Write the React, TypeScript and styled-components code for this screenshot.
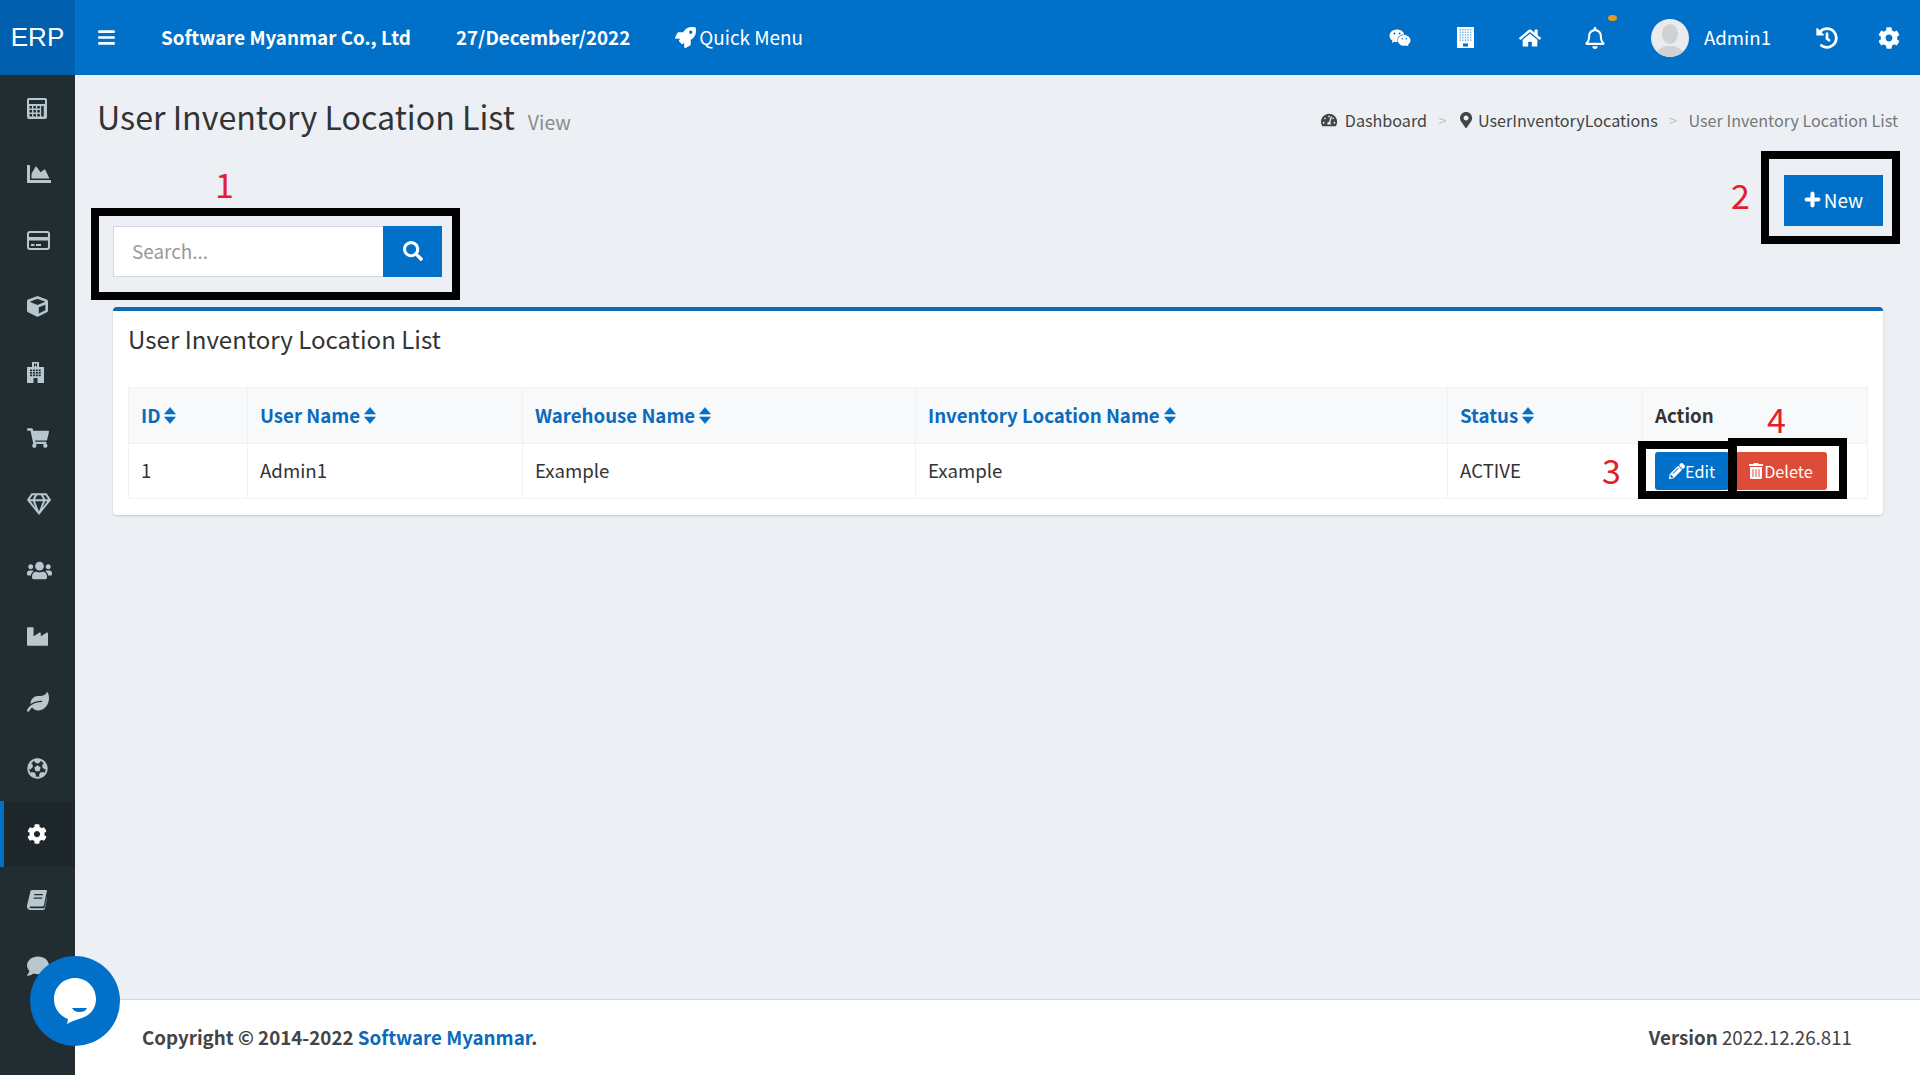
import React from "react";
import styled, { createGlobalStyle } from "styled-components";
import {
  FaBars, FaChartArea, FaCog, FaComment, FaCube, FaFutbol,
  FaHistory, FaHome, FaIndustry, FaLeaf, FaMapMarkerAlt, FaPencilAlt, FaPlus, FaRegBell, FaRegGem,
  FaRocket, FaSearch, FaShoppingCart, FaTachometerAlt, FaTrashAlt, FaUsers, FaWeixin,
} from "react-icons/fa";

const BLUE = "#0070c9";
const DARK = "#222d32";
const SANS = `"Noto Sans CJK SC", "Source Sans Pro", "Noto Sans", sans-serif`;

const Global = createGlobalStyle`
  html, body { margin: 0; padding: 0; }
  body { font-family: ${SANS}; color: #333; background: #ecf0f5; line-height: 1.2; }
  * { box-sizing: border-box; }
`;

const Shell = styled.div`
  position: relative;
  width: 1920px;
  height: 1075px;
  overflow: hidden;
  display: grid;
  grid-template-columns: 75px 1fr;
  grid-template-rows: 75px 1fr;
`;

const TopBar = styled.header`
  grid-column: 1 / 3;
  display: flex;
  align-items: center;
  background: ${BLUE};
  color: #fff;
`;

const Logo = styled.div`
  width: 75px;
  height: 75px;
  display: flex;
  align-items: center;
  justify-content: center;
  background: #0060ad;
  font: 26px "Liberation Sans", sans-serif;
`;

const Burger = styled.span`
  display: flex;
  margin: 0 45px 0 22px;
  font-size: 19px;
`;

const Brand = styled.span<{ $gap: number }>`
  font-size: 18.8px;
  font-weight: 700;
  margin-right: ${(p) => p.$gap}px;
  white-space: nowrap;
`;

const QuickMenu = styled.span`
  display: flex;
  align-items: center;
  gap: 3px;
  font-size: 18.9px;
`;

const TopRight = styled.div`
  margin-left: auto;
  display: flex;
  align-items: center;
`;

const TopIcon = styled.span<{ $w?: number }>`
  position: relative;
  width: ${(p) => p.$w ?? 65}px;
  display: flex;
  justify-content: center;
  font-size: 22px;
`;

const Dot = styled.i`
  position: absolute;
  left: 45px;
  top: -12px;
  width: 9px;
  height: 6px;
  border-radius: 50%;
  background: #e89a1e;
`;

const AvatarWrap = styled.span`
  display: flex;
  margin: 0 15px 0 23px;
`;

const UserName = styled.span`
  font-size: 18.67px;
  margin-right: 25px;
`;

const Sidebar = styled.nav`
  background: ${DARK};
`;

const SideItem = styled.div<{ $active?: boolean; $size: number }>`
  height: 66px;
  display: flex;
  align-items: center;
  padding-left: ${(p) => (p.$active ? 23 : 27)}px;
  font-size: ${(p) => p.$size}px;
  color: ${(p) => (p.$active ? "#fff" : "#b8c7ce")};
  background: ${(p) => (p.$active ? "#1e282c" : "transparent")};
  border-left: ${(p) => (p.$active ? `4px solid ${BLUE}` : "0")};
`;

const Main = styled.main`
  display: flex;
  flex-direction: column;
  min-width: 0;
`;

const Content = styled.section`
  flex: 1;
`;

const PageHeader = styled.div`
  height: 76px;
  padding: 7px 22px 0 22px;
  display: flex;
  align-items: center;
  justify-content: space-between;
`;

const Title = styled.h1`
  margin: 0;
  font-size: 32.2px;
  font-weight: 400;
  color: #333;
`;

const SubTitle = styled.small`
  margin-left: 13px;
  font-size: 19.5px;
  color: #8a8a8a;
`;

const Crumbs = styled.div`
  display: flex;
  align-items: center;
  font-size: 16.15px;
  color: #444;
  padding-top: 8px;
`;

const CrumbIcon = styled.span<{ $gap: number }>`
  display: flex;
  margin-right: ${(p) => p.$gap}px;
`;

const CrumbSep = styled.span`
  margin: 0 11.5px;
  color: #bbb;
  font-size: 14px;
`;

const CrumbLast = styled.span`
  color: #777;
`;

const Toolbar = styled.div`
  height: 156px;
  padding: 24px 37px 0 38px;
  display: flex;
  justify-content: space-between;
  align-items: flex-start;
`;

const SearchGroup = styled.div`
  margin-top: 51px;
  display: flex;
  height: 51px;
`;

const SearchInput = styled.input`
  width: 270px;
  height: 51px;
  padding: 0 18px 2px;
  border: 1px solid #d2d6de;
  border-right: 0;
  background: #fff;
  font: 18.9px ${SANS};
  outline: none;
  &::placeholder { color: #999; opacity: 1; }
`;

const SearchButton = styled.button`
  width: 59px;
  height: 51px;
  padding: 0 0 2px;
  border: 0;
  background: ${BLUE};
  color: #fff;
  font-size: 20px;
  display: flex;
  align-items: center;
  justify-content: center;
`;

const NewButton = styled.button`
  width: 99px;
  height: 51px;
  padding: 0 0 2px;
  border: 0;
  background: ${BLUE};
  color: #fff;
  font: 18.9px ${SANS};
  display: flex;
  align-items: center;
  justify-content: center;
  gap: 3px;
  svg { stroke: currentColor; stroke-width: 25; }
`;

const Card = styled.div`
  margin: 0 37px 0 38px;
  height: 208px;
  padding: 0 15px;
  background: #fff;
  border-top: 4px solid #0f6ab4;
  border-radius: 4px;
  box-shadow: 0 1px 2px rgba(0, 0, 0, 0.18);
`;

const CardTitle = styled.h3`
  margin: 0;
  height: 76px;
  display: flex;
  align-items: center;
  padding-bottom: 20px;
  font-size: 24.1px;
  font-weight: 400;
  color: #333;
`;

const Table = styled.table`
  width: 1739px;
  table-layout: fixed;
  border-collapse: collapse;
  border: 1px solid #f4f4f4;
  font-size: 18.67px;
`;

const Th = styled.th<{ $plain?: boolean }>`
  height: 56px;
  padding: 0 12px;
  text-align: left;
  font-weight: 700;
  background: #f8f9fa;
  border: 1px solid #f1f1f1;
  color: ${(p) => (p.$plain ? "#333" : "#0b6abb")};
  white-space: nowrap;
`;

const ThInner = styled.span`
  display: inline-flex;
  align-items: center;
  gap: 4px;
`;

const Td = styled.td<{ $action?: boolean }>`
  height: 55px;
  padding: 0 12px ${(p) => (p.$action ? 0 : 2)}px;
  border: 1px solid #f1f1f1;
  color: #333;
`;

const Actions = styled.div`
  display: flex;
  gap: 5px;
`;

const ActionButton = styled.button<{ $danger?: boolean }>`
  height: 38px;
  padding: 0 14px;
  display: flex;
  align-items: center;
  border: 0;
  border-radius: 3px;
  color: #fff;
  background: ${(p) => (p.$danger ? "#dd4b39" : BLUE)};
  font: 16.3px ${SANS};
  svg { font-size: 16px; }
`;

const Footer = styled.footer`
  height: 76px;
  padding: 0 68px 0 67px;
  display: flex;
  align-items: center;
  justify-content: space-between;
  background: #fff;
  border-top: 1px solid #d2d6de;
  font-size: 18.75px;
  color: #444;
`;

const FooterStrong = styled.strong`
  font-weight: 700;
`;

const FooterLink = styled.span`
  color: #0b6abb;
`;

const Mark = styled.div<{ $x: number; $y: number; $w: number; $h: number }>`
  position: absolute;
  left: ${(p) => p.$x}px;
  top: ${(p) => p.$y}px;
  width: ${(p) => p.$w}px;
  height: ${(p) => p.$h}px;
  border: 8px solid #000;
  pointer-events: none;
`;

const Digit = styled.span<{ $x: number; $y: number }>`
  position: absolute;
  left: ${(p) => p.$x}px;
  top: ${(p) => p.$y}px;
  font-size: 34px;
  line-height: 1;
  color: #e2202c;
`;

const ChatBubble = styled.div`
  position: absolute;
  left: 30px;
  top: 956px;
  width: 90px;
  height: 90px;
  border-radius: 50%;
  background: ${BLUE};
  display: flex;
  align-items: center;
  justify-content: center;
`;

const Avatar = () => (
  <svg width="38" height="38" viewBox="0 0 38 38">
    <defs>
      <clipPath id="avatar-clip"><circle cx="19" cy="19" r="19" /></clipPath>
    </defs>
    <g clipPath="url(#avatar-clip)">
      <rect width="38" height="38" fill="#e9ebee" />
      <ellipse cx="19" cy="15" rx="8" ry="10" fill="#cfd1d4" />
      <path d="M4 38c1-7 6-9 11-11h8c5 2 10 4 11 11z" fill="#cfd1d4" />
    </g>
  </svg>
);

const ChatGlyph = () => (
  <svg width="44" height="48" viewBox="0 0 44 48">
    <path d="M22 1c12 0 21 9.500 21 21 0 10-6 16-14 19-4 1.500-9 2.500-15 6l1-5C7 39 1 32 1 22 1 10.500 10 1 22 1z" fill="#fff" />
    <path d="M19 31h15c-1.500 3-4 4-7.500 4S21 34 19 31z" fill={BLUE} />
  </svg>
);

const SortIcon = () => (
  <svg width="12" height="17" viewBox="0 0 12 17">
    <path d="M6 0.500 11.500 7H0.500zM0.500 10H11.500L6 16.500z" fill={BLUE} stroke={BLUE} strokeWidth="0.600" strokeLinejoin="round" />
  </svg>
);

const range = (n: number) => Array.from({ length: n }, (_, i) => i);

const CalculatorIcon = () => (
  <svg width="20" height="21" viewBox="0 0 20 21">
    <rect width="20" height="21" rx="2" fill="currentColor" />
    <rect x="2" y="2" width="16" height="4" fill={DARK} />
    {range(3).map((r) =>
      range(4).map((c) =>
        c === 3 && r > 0 ? null : (
          <rect key={`${r}-${c}`} x={2.5 + c * 3.900} y={8 + r * 4} width="2.500" height={c === 3 ? 10.500 : 2.500} fill={DARK} />
        ),
      ),
    )}
  </svg>
);

const CardIcon = () => (
  <svg width="23" height="19" viewBox="0 0 23 19">
    <rect x="1" y="1" width="21" height="17" rx="2" fill="none" stroke="currentColor" strokeWidth="2" />
    <rect x="1" y="6" width="21" height="3.500" fill="currentColor" />
    <rect x="4" y="13" width="3.500" height="2" fill="currentColor" />
    <rect x="9" y="13" width="5" height="2" fill="currentColor" />
  </svg>
);

const HospitalIcon = () => (
  <svg width="17" height="21" viewBox="0 0 17 21">
    <path d="M5 0h7v5h5v16H0V5h5z" fill="currentColor" />
    <path d="M7 1.500v3h1V3.500h1V4.500h1v-3H9v1H8v-1z" fill={DARK} />
    {range(3).map((r) =>
      range(4).map((c) => (
        <rect key={`${r}-${c}`} x={3 + c * 2.900} y={7.500 + r * 2.500} width="2" height="1.700" fill={DARK} />
      )),
    )}
    <rect x="6.500" y="16" width="4" height="5" fill={DARK} />
  </svg>
);

const OfficeIcon = () => (
  <svg width="17" height="21" viewBox="0 0 17 21">
    <rect width="17" height="21" fill="currentColor" />
    {range(5).map((r) =>
      range(5).map((c) => (
        <rect key={`${r}-${c}`} x={2.500 + c * 2.600} y={2 + r * 2.600} width="1.500" height="1.500" fill="#7fb6e3" />
      )),
    )}
    <rect x="6" y="16.500" width="5" height="3" fill={BLUE} />
  </svg>
);

const BookIcon = () => (
  <svg width="20" height="20" viewBox="0 0 20 20">
    <path d="M5 0H19.500c.5 0 .5.500.4 1L17 15c-.2 1-1 1.500-2 1.500H4c-1 0-1.500.3-1.500.8s.5.900 1.500.900H16.500c.5 0 1-.4 1.200-1L20 7v1.500l-2 9.500c-.2 1-1 2-2 2H3.500C1.500 20 0 18.500 0 16.500c0-.5 0-1 .2-1.500L3.500 1C3.700.4 4.300 0 5 0z" fill="currentColor" />
    <path d="M7.500 4H16l-.3 1.300H7.200zM6.800 7.500H15.300l-.3 1.300H6.500z" fill={DARK} />
  </svg>
);

const sideItems: { Icon: React.ComponentType; size: number }[] = [
  { Icon: CalculatorIcon, size: 20 },
  { Icon: FaChartArea, size: 24 },
  { Icon: CardIcon, size: 20 },
  { Icon: FaCube, size: 21 },
  { Icon: HospitalIcon, size: 20 },
  { Icon: FaShoppingCart, size: 22 },
  { Icon: FaRegGem, size: 24 },
  { Icon: FaUsers, size: 25 },
  { Icon: FaIndustry, size: 21 },
  { Icon: FaLeaf, size: 22 },
  { Icon: FaFutbol, size: 21 },
  { Icon: FaCog, size: 20 },
  { Icon: BookIcon, size: 20 },
  { Icon: FaComment, size: 22 },
];

const SortableHead = ({ label }: { label: string }) => (
  <Th>
    <ThInner>{label}<SortIcon /></ThInner>
  </Th>
);

export default function App() {
  return (
    <Shell>
      <Global />
      <TopBar>
        <Logo>ERP</Logo>
        <Burger><FaBars /></Burger>
        <Brand $gap={45}>Software Myanmar Co., Ltd</Brand>
        <Brand $gap={45}>27/December/2022</Brand>
        <QuickMenu><FaRocket size={21} />Quick Menu</QuickMenu>
        <TopRight>
          <TopIcon><FaWeixin /></TopIcon>
          <TopIcon><OfficeIcon /></TopIcon>
          <TopIcon><FaHome /></TopIcon>
          <TopIcon><FaRegBell /><Dot /></TopIcon>
          <AvatarWrap><Avatar /></AvatarWrap>
          <UserName>Admin1</UserName>
          <TopIcon $w={62}><FaHistory /></TopIcon>
          <TopIcon $w={62}><FaCog /></TopIcon>
        </TopRight>
      </TopBar>
      <Sidebar>
        {sideItems.map(({ Icon, size }, i) => (
          <SideItem key={i} $active={i === 11} $size={size}><Icon /></SideItem>
        ))}
      </Sidebar>
      <Main>
        <Content>
          <PageHeader>
            <Title>User Inventory Location List<SubTitle>View</SubTitle></Title>
            <Crumbs>
              <CrumbIcon $gap={8}><FaTachometerAlt /></CrumbIcon>Dashboard
              <CrumbSep>&gt;</CrumbSep>
              <CrumbIcon $gap={4}><FaMapMarkerAlt /></CrumbIcon>UserInventoryLocations
              <CrumbSep>&gt;</CrumbSep>
              <CrumbLast>User Inventory Location List</CrumbLast>
            </Crumbs>
          </PageHeader>
          <Toolbar>
            <SearchGroup>
              <SearchInput placeholder="Search..." />
              <SearchButton><FaSearch /></SearchButton>
            </SearchGroup>
            <NewButton><FaPlus size={17} />New</NewButton>
          </Toolbar>
          <Card>
            <CardTitle>User Inventory Location List</CardTitle>
            <Table>
              <colgroup>
                <col width="119" /><col width="275" /><col width="393" /><col width="532" /><col width="195" /><col width="225" />
              </colgroup>
              <thead>
                <tr>
                  <SortableHead label="ID" />
                  <SortableHead label="User Name" />
                  <SortableHead label="Warehouse Name" />
                  <SortableHead label="Inventory Location Name" />
                  <SortableHead label="Status" />
                  <Th $plain>Action</Th>
                </tr>
              </thead>
              <tbody>
                <tr>
                  <Td>1</Td>
                  <Td>Admin1</Td>
                  <Td>Example</Td>
                  <Td>Example</Td>
                  <Td>ACTIVE</Td>
                  <Td $action>
                    <Actions>
                      <ActionButton><FaPencilAlt />Edit</ActionButton>
                      <ActionButton $danger><FaTrashAlt />Delete</ActionButton>
                    </Actions>
                  </Td>
                </tr>
              </tbody>
            </Table>
          </Card>
        </Content>
        <Footer>
          <span><FooterStrong>Copyright © 2014-2022 <FooterLink>Software Myanmar</FooterLink>.</FooterStrong></span>
          <span><FooterStrong>Version</FooterStrong> 2022.12.26.811</span>
        </Footer>
      </Main>
      <Mark $x={91} $y={208} $w={369} $h={92} />
      <Mark $x={1761} $y={151} $w={139} $h={93} />
      <Mark $x={1638} $y={441} $w={99} $h={58} />
      <Mark $x={1728} $y={438} $w={119} $h={61} />
      <Digit $x={215} $y={167}>1</Digit>
      <Digit $x={1731} $y={178}>2</Digit>
      <Digit $x={1602} $y={453}>3</Digit>
      <Digit $x={1767} $y={402}>4</Digit>
      <ChatBubble><ChatGlyph /></ChatBubble>
    </Shell>
  );
}
